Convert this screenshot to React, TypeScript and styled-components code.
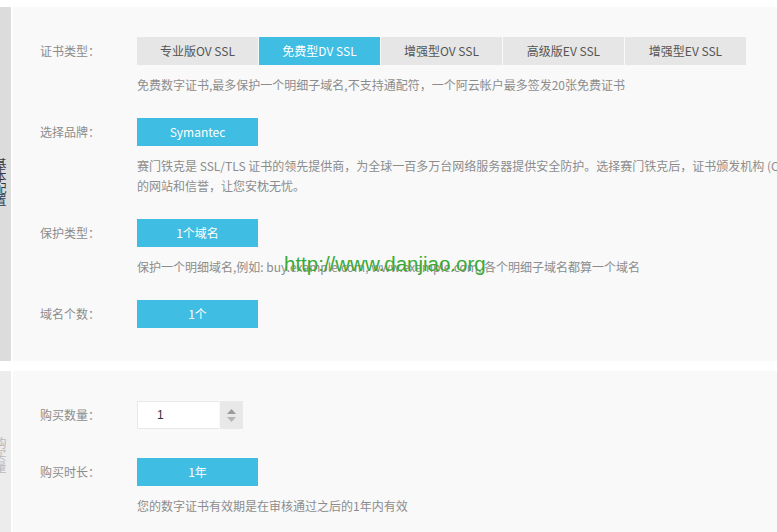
import React from "react";
import styled, { createGlobalStyle } from "styled-components";

const Global = createGlobalStyle`
  html, body { margin: 0; padding: 0; background: #ffffff; }
  body { font-family: "Noto Sans CJK SC", "Noto Sans", sans-serif; font-size: 12px; }
`;

const Page = styled.div`
  position: relative;
  width: 777px;
  height: 532px;
  overflow: hidden;
  background: #ffffff;
  padding-top: 7px;
  box-sizing: border-box;
  display: flex;
  flex-direction: column;
  gap: 10px;
`;

const Section = styled.section<{ $grow?: boolean }>`
  display: flex;
  gap: 2px;
  flex: ${(p) => (p.$grow ? "1" : "none")};
`;

const SideBar = styled.div<{ $light?: boolean }>`
  width: 11px;
  flex: none;
  background: ${(p) => (p.$light ? "#ececec" : "#dcdcdc")};
  overflow: hidden;
  display: flex;
  align-items: flex-start;
`;

const SideText = styled.div<{ $top: number; $light?: boolean }>`
  writing-mode: vertical-rl;
  font-size: 12px;
  line-height: 12px;
  margin-left: -6px;
  margin-top: ${(p) => p.$top}px;
  color: ${(p) => (p.$light ? "#b8b8b8" : "#2d3a4d")};
`;

const Panel = styled.div<{ $pb: number; $gap: number }>`
  flex: 1;
  background: #f9f9f9;
  padding: 30px 0 ${(p) => p.$pb}px 27px;
  display: flex;
  flex-direction: column;
  gap: ${(p) => p.$gap}px;
`;

const Row = styled.div`
  display: grid;
  grid-template-columns: 97px 1fr;
  align-items: start;
`;

const Label = styled.div`
  height: 28px;
  line-height: 28px;
  color: #8c8c8c;
  font-size: 12px;
  white-space: nowrap;
`;

const Control = styled.div`
  display: flex;
  flex-direction: column;
  align-items: flex-start;
  min-width: 0;
`;

const Tabs = styled.div`
  display: flex;
  gap: 1px;
`;

const Tab = styled.div<{ $active?: boolean }>`
  width: 121px;
  height: 28px;
  line-height: 28px;
  text-align: center;
  font-size: 12px;
  background: ${(p) => (p.$active ? "#40bde2" : "#e6e6e6")};
  color: ${(p) => (p.$active ? "#ffffff" : "#555555")};
  white-space: nowrap;
`;

const Choice = styled.div`
  width: 121px;
  height: 28px;
  line-height: 28px;
  text-align: center;
  font-size: 12px;
  background: #40bde2;
  color: #ffffff;
`;

const Desc = styled.div`
  margin-top: 10px;
  line-height: 20px;
  font-size: 12px;
  color: #8c8c8c;
  white-space: nowrap;
`;

const Stepper = styled.div`
  display: flex;
  height: 28px;
`;

const NumberBox = styled.div`
  height: 26px;
  width: 62px;
  border: 1px solid #e8e8e8;
  border-right: none;
  background: #ffffff;
  line-height: 26px;
  padding-left: 19px;
  color: #333333;
  font-size: 12px;
  font-family: "Liberation Sans", sans-serif;
`;

const Spin = styled.div`
  width: 23px;
  height: 28px;
  margin-left: 1px;
  background: #e8e8e8;
  display: flex;
  flex-direction: column;
  align-items: center;
  justify-content: center;
  gap: 3px;
`;

const Watermark = styled.div`
  position: absolute;
  left: 284px;
  top: 252px;
  font-family: "Liberation Sans", Arial, sans-serif;
  font-size: 20.5px;
  line-height: 24px;
  color: #3aaa35;
  white-space: nowrap;
`;

const Arrow = ({ up }: { up?: boolean }) => (
  <svg width="9" height="5" viewBox="0 0 9 5">
    <polygon points={up ? "4.5,0 9,5 0,5" : "0,0 9,0 4.5,5"} fill={up ? "#9a9a9a" : "#b5b5b5"} />
  </svg>
);

const tabs = ["专业版OV SSL", "免费型DV SSL", "增强型OV SSL", "高级版EV SSL", "增强型EV SSL"];

export default function App() {
  return (
    <>
      <Global />
      <Page>
        <Section>
          <SideBar>
            <SideText $top={151}>基本配置</SideText>
          </SideBar>
          <Panel $pb={33} $gap={23}>
            <Row>
              <Label>证书类型：</Label>
              <Control>
                <Tabs>
                  {tabs.map((t, i) => (
                    <Tab key={t} $active={i === 1}>
                      {t}
                    </Tab>
                  ))}
                </Tabs>
                <Desc>免费数字证书,最多保护一个明细子域名,不支持通配符，一个阿云帐户最多签发20张免费证书</Desc>
              </Control>
            </Row>
            <Row>
              <Label>选择品牌：</Label>
              <Control>
                <Choice>Symantec</Choice>
                <Desc>
                  赛门铁克是 SSL/TLS 证书的领先提供商，为全球一百多万台网络服务器提供安全防护。选择赛门铁克后，证书颁发机构 (CA)
                  <br />
                  的网站和信誉，让您安枕无忧。
                </Desc>
              </Control>
            </Row>
            <Row>
              <Label>保护类型：</Label>
              <Control>
                <Choice>1个域名</Choice>
                <Desc>保护一个明细域名,例如: buy.example.com, www.example.com, 各个明细子域名都算一个域名</Desc>
              </Control>
            </Row>
            <Row>
              <Label>域名个数：</Label>
              <Control>
                <Choice>1个</Choice>
              </Control>
            </Row>
          </Panel>
        </Section>
        <Section $grow>
          <SideBar $light>
            <SideText $top={66} $light>购买量</SideText>
          </SideBar>
          <Panel $pb={10} $gap={29}>
            <Row>
              <Label>购买数量：</Label>
              <Control>
                <Stepper>
                  <NumberBox>1</NumberBox>
                  <Spin>
                    <Arrow up />
                    <Arrow />
                  </Spin>
                </Stepper>
              </Control>
            </Row>
            <Row>
              <Label>购买时长：</Label>
              <Control>
                <Choice>1年</Choice>
                <Desc>您的数字证书有效期是在审核通过之后的1年内有效</Desc>
              </Control>
            </Row>
          </Panel>
        </Section>
        <Watermark>http://www.danjiao.org</Watermark>
      </Page>
    </>
  );
}
